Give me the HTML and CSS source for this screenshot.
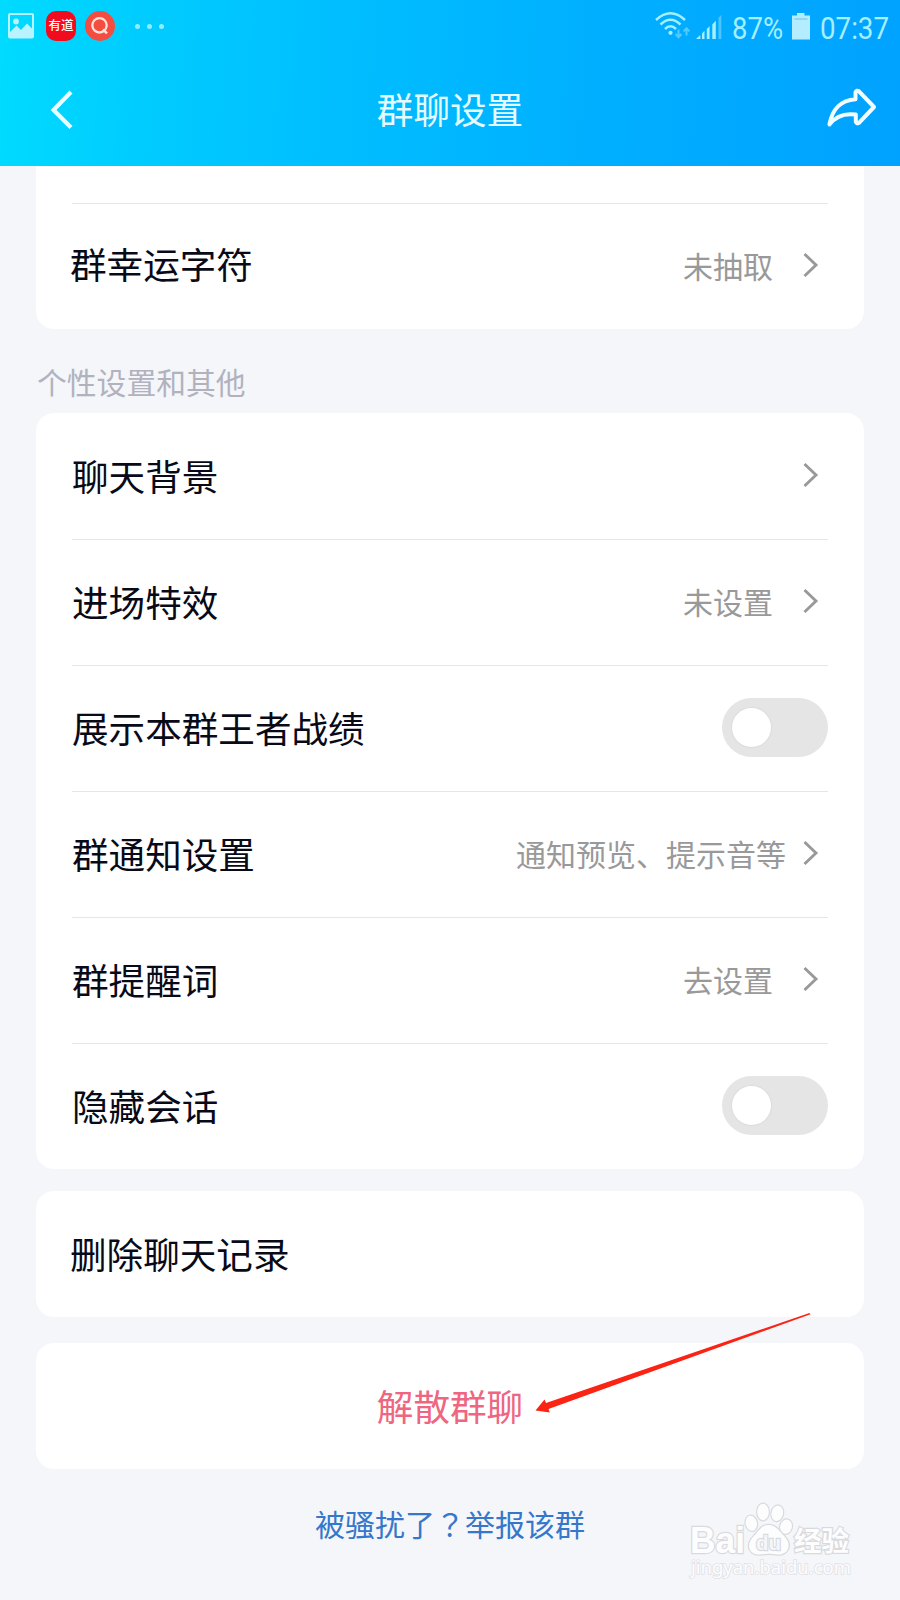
FILE: index.html
```html
<!DOCTYPE html>
<html lang="zh-CN">
<head>
	<meta charset="utf-8">
	<meta name="viewport" content="width=device-width, initial-scale=1">
	<title>群聊设置</title>
	<link rel="stylesheet" href="styles.css">
</head>
<body>

<!-- Chevron used at the end of the rows -->
<svg class="defs" width="0" height="0">
	<symbol id="chevron" viewBox="0 0 16 26">
		<path d="M1.5 2 L13 13 L1.5 24" fill="none" stroke="#999" stroke-width="2.9"/>
	</symbol>
</svg>

<div class="header">
	<div class="status-bar">
		<div class="status-left">
			<svg width="26" height="26" viewBox="0 0 26 26">
				<rect x="1" y="1" width="24" height="23.5" rx="1" fill="none" stroke="#b9f3ff" stroke-width="2"/>
				<circle cx="8" cy="8.5" r="2.9" fill="#b9f3ff"/>
				<path d="M1 20 L8.5 12.5 L13 17 L19 10.5 L25 16.5 V24.5 H1 Z" fill="#b9f3ff"/>
			</svg>
			<div class="app-icon youdao">有道</div>
			<div class="app-icon search">
				<svg width="30" height="30" viewBox="0 0 30 30">
					<circle cx="14.5" cy="14.3" r="7.2" fill="none" stroke="#ffe3dc" stroke-width="2.3"/>
					<path d="M18 18.5 L22 22.3" stroke="#ffe3dc" stroke-width="2.5"/>
				</svg>
			</div>
			<div class="dots">
				<span class="dot"></span>
				<span class="dot"></span>
				<span class="dot"></span>
			</div>
		</div>
		<div class="status-right">
			<!-- wifi + traffic, then the signal bars -->
			<svg width="68" height="28" viewBox="0 0 68 28">
				<g fill="none" stroke="#a5efff" stroke-width="2.5">
					<path d="M1 9 Q15.5 -4.5 30 9"/>
					<path d="M5.5 13.5 Q15.5 4 25.5 13.5"/>
					<path d="M10 18 Q15.5 12.5 21 18"/>
				</g>
				<circle cx="15.5" cy="21.8" r="2.1" fill="#a5efff"/>
				<g fill="none" stroke="#55c9ff" stroke-width="2">
					<path d="M23.5 18.5 V26 M20.6 23 L23.5 26.2 L26.4 23"/>
					<path d="M31.5 24.5 V17.500 M28.6 20.4 L31.5 17.2 L34.4 20.4"/>
				</g>
				<g fill="#a5efff">
					<path d="M41 28 L45.3 24 V28 Z"/>
					<path d="M47 28 V22.4 L49.5 19.8 V28 Z"/>
					<path d="M51.8 28 V18 L54.6 15.2 V28 Z"/>
					<path d="M57.3 28 V13.5 L60.8 9.8 V28 Z"/>
				</g>
				<path d="M63.5 28 V6.8 L66.3 4 V28 Z" fill="#4fc4ff"/>
			</svg>
			<svg class="status-text battery-level" width="51" height="32" viewBox="0 0 51 32">
				<text x="0" y="27.5" textLength="51" lengthAdjust="spacingAndGlyphs">87%</text>
			</svg>
			<svg class="battery" width="18" height="28" viewBox="0 0 18 28">
				<path d="M5 0 H12.5 V2.5 H18 V26.5 H0 V2.5 H5 Z" fill="#b4edff"/>
				<path d="M2.5 6 H15.5" stroke="#6cbfe8" stroke-width="1"/>
			</svg>
			<svg class="status-text" width="69" height="32" viewBox="0 0 69 32">
				<text x="0" y="27.5" textLength="69" lengthAdjust="spacingAndGlyphs">07:37</text>
			</svg>
		</div>
	</div>
	<div class="nav-bar">
		<svg class="back" width="26" height="40" viewBox="0 0 26 40">
			<path d="M22 2 L4.5 20 L22 37.5" fill="none" stroke="#e9fdff" stroke-width="4.2"/>
		</svg>
		<div class="title">群聊设置</div>
		<svg class="share" width="52" height="42" viewBox="0 0 52 42">
			<path d="M3.4 37.500 C6.500 21.5 14.5 13.5 29.5 12.3 V5.2 Q30.500 2.800 33 4.3 L48 20 L33 35.800 Q30.500 37.3 29.8 34.8 V27.6 C19 26 10.500 28.2 3.4 37.500 Z" fill="none" stroke="#f2fdff" stroke-width="4" stroke-linejoin="round"/>
		</svg>
	</div>
</div>

<div class="content">
	<div class="card first-card">
		<div class="row">
			<div class="label">群幸运字符</div>
			<div class="value">未抽取</div>
			<svg class="chevron"><use href="#chevron"/></svg>
		</div>
	</div>

	<div class="section-title">个性设置和其他</div>

	<div class="card">
		<div class="row">
			<div class="label">聊天背景</div>
			<svg class="chevron"><use href="#chevron"/></svg>
		</div>
		<div class="row">
			<div class="label">进场特效</div>
			<div class="value">未设置</div>
			<svg class="chevron"><use href="#chevron"/></svg>
		</div>
		<div class="row">
			<div class="label">展示本群王者战绩</div>
			<div class="toggle"><div class="knob"></div></div>
		</div>
		<div class="row">
			<div class="label">群通知设置</div>
			<div class="value wide-value">通知预览、提示音等</div>
			<svg class="chevron"><use href="#chevron"/></svg>
		</div>
		<div class="row">
			<div class="label">群提醒词</div>
			<div class="value">去设置</div>
			<svg class="chevron"><use href="#chevron"/></svg>
		</div>
		<div class="row">
			<div class="label">隐藏会话</div>
			<div class="toggle"><div class="knob"></div></div>
		</div>
	</div>

	<div class="card clear-card">
		<div class="row">
			<div class="label">删除聊天记录</div>
		</div>
	</div>

	<div class="card dismiss-card">
		<div class="dismiss">解散群聊</div>
	</div>

	<div class="report">被骚扰了<span class="mark" lang="zh-TW">？</span>举报该群</div>
</div>

<!-- Red arrow pointing at the dismiss button -->
<svg class="arrow" width="280" height="106" viewBox="0 0 280 106">
	<path d="M0.5 100.5 L9.5 89.5 L11 93 L274.5 3 L275.5 4.3 L13.5 99 L14.8 102.5 Z" fill="#fa2314"/>
</svg>

<svg class="watermark" width="170" height="84" viewBox="0 0 170 84">
	<g class="logo">
		<text class="latin" x="2" y="56" textLength="55" lengthAdjust="spacingAndGlyphs">Bai</text>
		<ellipse cx="63.3" cy="26.3" rx="5.6" ry="7.6" transform="rotate(-12 63.3 26.3)"/>
		<ellipse cx="75" cy="15" rx="5.8" ry="8.2"/>
		<ellipse cx="89.3" cy="16.3" rx="5.8" ry="7.800" transform="rotate(12 89.3 16.3)"/>
		<ellipse cx="98" cy="29.7" rx="5.8" ry="7.2" transform="rotate(15 98 29.7)"/>
		<path d="M80.5 28 C88 28 91 34 97 40 C105 49 99 58.5 89 57.500 C83 56.5 79 56.5 73 57.500 C62 58.5 57 49 65 40 C71 34 73 28 80.5 28 Z"/>
		<text class="du" x="68" y="53" textLength="25" lengthAdjust="spacingAndGlyphs">du</text>
		<text class="han" x="106" y="54" textLength="55" lengthAdjust="spacingAndGlyphs">经验</text>
	</g>
	<text class="site" x="3" y="77" textLength="160" lengthAdjust="spacingAndGlyphs">jingyan.baidu.com</text>
</svg>

</body>
</html>
```
FILE: styles.css
```css
* {
	box-sizing: border-box;
}

body {
	margin: 0;
	position: relative;
	width: 900px;
	height: 1600px;
	overflow: hidden;
	background: #f4f6fa;
	color: #080a18;
	font-family: "Noto Sans CJK SC", sans-serif;
}

svg {
	display: block;
	flex: none;
}

.defs {
	position: absolute;
}

/* Header */
.header {
	height: 166px;
	background: linear-gradient(93deg, #00dbff 0%, #00ccff 16%, #00bfff 36%, #00b0ff 65%, #00a2ff 100%);
}

.status-bar {
	height: 54px;
	display: flex;
	justify-content: space-between;
	padding: 11px 11px 0 8px;
}

.status-left {
	display: flex;
	align-items: center;
	height: 30px;
}

.app-icon {
	width: 30px;
	height: 30px;
	flex: none;
}

.youdao {
	margin-left: 12px;
	border-radius: 10px;
	background: #f20a1e;
	color: white;
	font-size: 12.5px;
	font-weight: 500;
	line-height: 28px;
	text-align: center;
}

.search {
	margin-left: 9px;
	border-radius: 50%;
	background: #f54c40;
}

.dots {
	display: flex;
	gap: 7px;
	margin-left: 20px;
}

.dot {
	width: 5px;
	height: 5px;
	border-radius: 50%;
	background: #8eeeff;
}

.status-right {
	display: flex;
}

.status-text {
	margin-left: 10px;
	overflow: visible;
	font-family: Roboto, sans-serif;
	font-size: 32px;
	fill: #a5efff;
}

.battery-level {
	margin-left: 9px;
}

.battery {
	margin: 2px 0 0 9px;
}

.nav-bar {
	height: 112px;
	display: grid;
	grid-template-columns: 1fr auto 1fr;
	align-items: center;
	padding: 0 22px 0 49px;
}

.title {
	color: #e6fbff;
	font-size: 36.6px;
	margin: -4px 27px 0 0;
}

.share {
	margin-top: -4px;
	justify-self: end;
}

.back {
	margin-top: -1px;
}

/* Cards */
.content {
	padding: 0 36px;
}

.card {
	padding: 0 36px;
	border-radius: 18px;
	background: white;
}

.first-card {
	height: 163px;
	padding: 37px 36px 0 36px;
	border-radius: 0 0 18px 18px;
}

.first-card .row {
	border-top: 1px solid #e6e6e8;
}

.first-card .label {
	margin: -7px 0 0 -2px;
}

.row {
	height: 126px;
	display: flex;
	align-items: center;
}

.row + .row {
	border-top: 1px solid #e6e6e8;
}

.label {
	flex: 1;
	font-size: 36.6px;
	margin-top: -2px;
}

.value {
	color: #999;
	font-size: 30px;
	margin: -4px 30px 0 0;
}

.wide-value {
	margin-right: 17px;
}

.chevron {
	width: 16px;
	height: 26px;
	margin: -3px 9px 0 0;
}

.toggle {
	width: 106px;
	height: 59px;
	padding: 10px;
	border-radius: 30px;
	background: #e5e5e5;
	margin-top: -3px;
}

.knob {
	width: 39px;
	height: 39px;
	border-radius: 50%;
	background: white;
	box-shadow: 0 0 1px 1px #dcdcdc;
}

.section-title {
	height: 84px;
	padding: 10px 0 0 1px;
	color: #b2b2be;
	font-size: 29.8px;
	line-height: 84px;
}

.clear-card {
	margin-top: 22px;
}

.clear-card .label {
	margin-left: -2px;
}

.dismiss-card {
	margin-top: 26px;
}

.dismiss {
	height: 126px;
	color: #ee6680;
	font-size: 36.6px;
	line-height: 126px;
	text-align: center;
}

.report {
	margin-top: 32px;
	color: #3577ca;
	font-size: 30px;
	line-height: 44px;
	text-align: center;
}

/* The TC face centers the question mark in its box */
.mark {
	font-family: "Noto Sans CJK TC", sans-serif;
}

/* Things lying over the page */
.arrow {
	position: absolute;
	left: 535px;
	top: 1310px;
}

.watermark {
	position: absolute;
	left: 688px;
	top: 1497px;
	fill: #fdfdfe;
	stroke: #d9dade;
	paint-order: stroke;
}

.logo {
	stroke-width: 2.4px;
}

.latin, .du {
	font-family: "Liberation Sans", sans-serif;
	font-weight: bold;
	font-size: 36px;
}

.du {
	font-size: 21px;
	fill: #f4f6fa;
}

.han {
	font-size: 27px;
	font-weight: bold;
}

.site {
	font-family: "Noto Sans", sans-serif;
	font-size: 18.5px;
	stroke: #e0e1e5;
	stroke-width: 1.6px;
}
```
